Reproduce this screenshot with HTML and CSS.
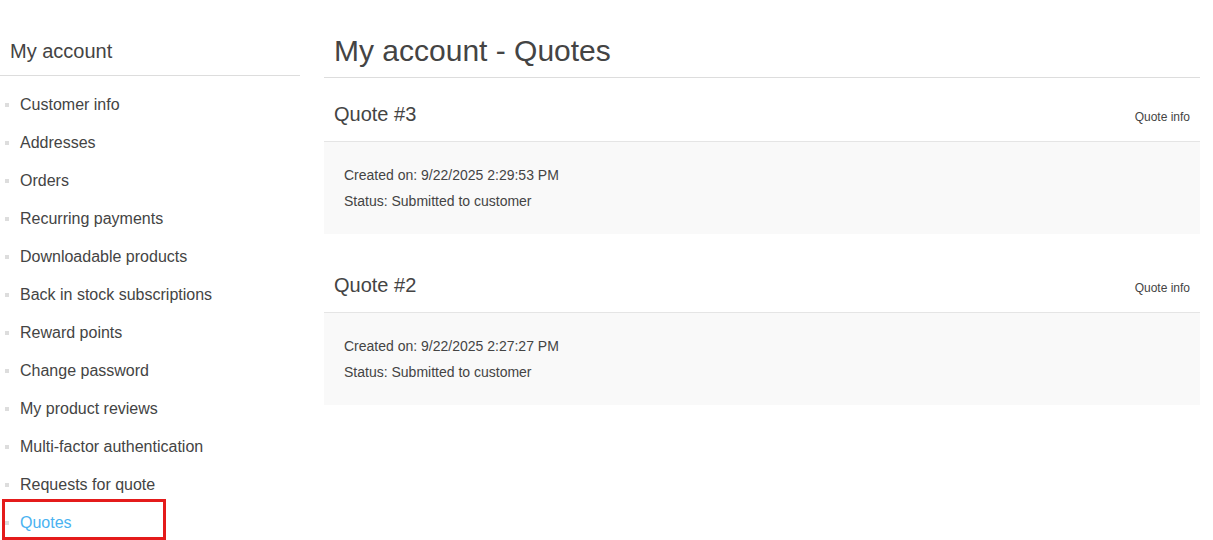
FILE: index.html
```html
<!DOCTYPE html>
<html>
<head>
<meta charset="utf-8">
<title>My account - Quotes</title>
<link rel="stylesheet" href="styles.css">
</head>
<body>
<div class="page">
  <aside class="side">
    <div class="block-title">My account</div>
    <ul class="nav">
      <li><a href="#">Customer info</a></li>
      <li><a href="#">Addresses</a></li>
      <li><a href="#">Orders</a></li>
      <li><a href="#">Recurring payments</a></li>
      <li><a href="#">Downloadable products</a></li>
      <li><a href="#">Back in stock subscriptions</a></li>
      <li><a href="#">Reward points</a></li>
      <li><a href="#">Change password</a></li>
      <li><a href="#">My product reviews</a></li>
      <li><a href="#">Multi-factor authentication</a></li>
      <li><a href="#">Requests for quote</a></li>
      <li class="active"><a href="#">Quotes</a><span class="highlight"></span></li>
    </ul>
  </aside>
  <main class="main">
    <div class="page-title"><h1>My account - Quotes</h1></div>
    <section class="quote">
      <div class="quote-head">
        <h2>Quote #3</h2>
        <a class="quote-link" href="#">Quote info</a>
      </div>
      <div class="quote-body">
        <div>Created on: 9/22/2025 2:29:53 PM</div>
        <div>Status: Submitted to customer</div>
      </div>
    </section>
    <section class="quote">
      <div class="quote-head">
        <h2>Quote #2</h2>
        <a class="quote-link" href="#">Quote info</a>
      </div>
      <div class="quote-body">
        <div>Created on: 9/22/2025 2:27:27 PM</div>
        <div>Status: Submitted to customer</div>
      </div>
    </section>
  </main>
</div>
</body>
</html>
```
FILE: styles.css
```css
html, body {
  margin: 0;
  padding: 0;
  background: #fff;
}
body {
  font-family: "Liberation Sans", Arial, sans-serif;
  color: #444;
}
a {
  color: inherit;
  text-decoration: none;
}
.page {
  display: flex;
  gap: 24px;
  padding-top: 24px;
}
.side {
  width: 300px;
  flex: none;
}
.block-title {
  padding: 14px 30px 11px 10px;
  font-size: 20px;
  line-height: 26px;
  border-bottom: 1px solid #ddd;
}
.nav {
  list-style: none;
  margin: 10px 0 0;
  padding: 0;
}
.nav li {
  position: relative;
  padding: 8px 0 8px 20px;
  font-size: 16px;
  line-height: 22px;
}
.nav li::before {
  content: "";
  position: absolute;
  left: 5px;
  top: 17px;
  width: 4px;
  height: 4px;
  background: #ddd;
}
.nav li.active a {
  color: #4ab2f1;
}
.highlight {
  position: absolute;
  left: 2px;
  top: -5px;
  width: 164px;
  height: 41px;
  box-sizing: border-box;
  border: 3px solid #e41b1b;
}
.main {
  width: 876px;
  flex: none;
}
.page-title {
  padding: 7px 10px 6px;
  border-bottom: 1px solid #ddd;
}
.page-title h1 {
  margin: 0;
  font-size: 30px;
  font-weight: normal;
  line-height: 40px;
}
.quote {
  margin-bottom: 15px;
}
.quote-head {
  display: flex;
  align-items: baseline;
  justify-content: space-between;
  padding: 24px 10px 15px;
  border-bottom: 1px solid #e5e5e5;
}
.quote-head h2 {
  margin: 0;
  font-size: 20px;
  font-weight: normal;
  line-height: 24px;
}
.quote-link {
  font-size: 12px;
}
.quote-body {
  background: #f9f9f9;
  padding: 20px;
  font-size: 14px;
  line-height: 26px;
}
```
